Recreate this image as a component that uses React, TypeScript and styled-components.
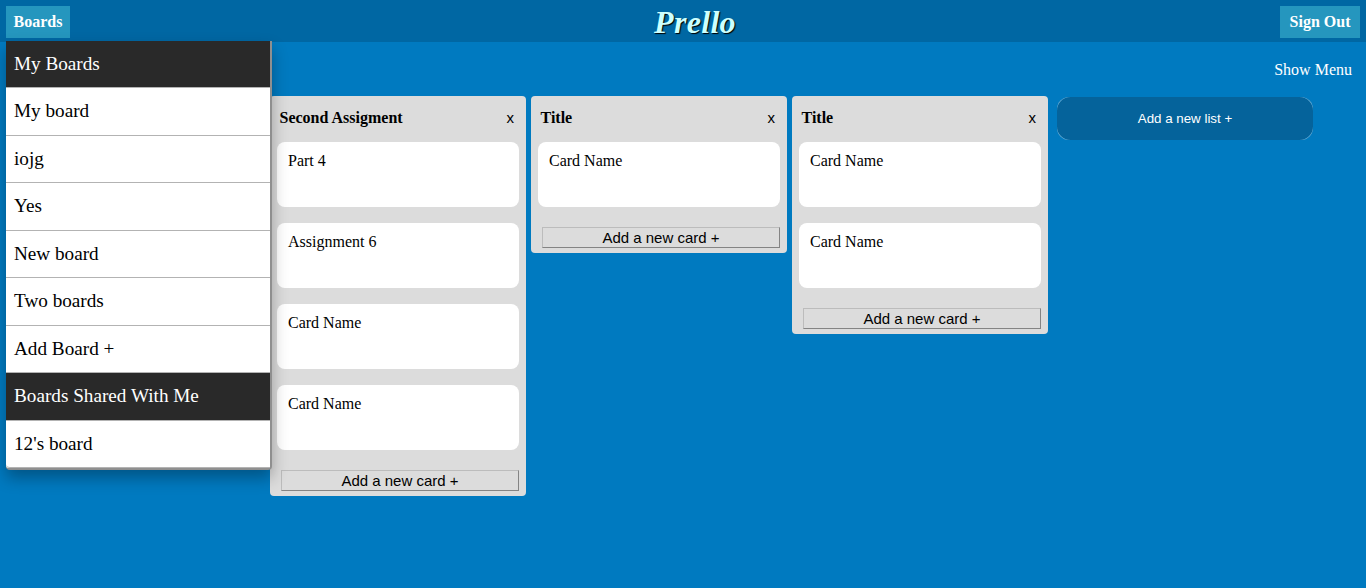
import React from 'react';
import styled, { createGlobalStyle } from 'styled-components';

const GlobalStyle = createGlobalStyle`
  * { box-sizing: border-box; }
  body {
    margin: 0;
    min-height: 100vh;
    background: #007ac0;
    font-family: "Liberation Serif", "Times New Roman", serif;
    font-size: 16px;
    overflow: hidden;
  }
`;

const Header = styled.header`
  display: flex;
  align-items: flex-start;
  justify-content: space-between;
  height: 42px;
  padding: 6px;
  background: #0067a3;
`;

const Side = styled.div<{ $end?: boolean }>`
  flex: 1;
  display: flex;
  position: relative;
  justify-content: ${(p) => (p.$end ? 'flex-end' : 'flex-start')};
`;

const HeaderButton = styled.button<{ $width: number }>`
  width: ${(p) => p.$width}px;
  height: 32px;
  padding: 0;
  border: none;
  background: #2596be;
  color: #fff;
  font: bold 16px "Liberation Serif", serif;
`;

const Logo = styled.h1`
  margin: 2px 0 0 24px;
  color: #ccffff;
  font-size: 32px;
  line-height: 28px;
  font-style: italic;
  letter-spacing: 0.3px;
  text-shadow: 1px 1px 1px #000;
`;

const BoardMenu = styled.nav`
  position: absolute;
  top: 35px;
  left: 0;
  z-index: 2;
  width: 266px;
  border-right: 2px solid #8f8f8f;
  border-bottom: 2px solid #8f8f8f;
  border-radius: 0 0 4px 4px;
  background: #fff;
  box-shadow: 0 8px 16px rgba(0, 0, 0, 0.3);
`;

const MenuRow = styled.div<{ $heading?: boolean }>`
  height: 47.5px;
  padding-left: 8px;
  border-bottom: 1px solid #b3b3b3;
  background: ${(p) => (p.$heading ? '#292929' : '#fff')};
  color: ${(p) => (p.$heading ? '#fff' : '#000')};
  font-size: 19.2px;
  line-height: 46px;

  &:first-child { height: 47px; }
  &:last-child { border-bottom-left-radius: 4px; }
`;

const Toolbar = styled.div`
  display: flex;
  justify-content: flex-end;
  height: 54px;
  padding: 19px 14px 0 0;
  color: #fff;
  line-height: 18px;
`;

const Board = styled.main`
  display: flex;
  align-items: flex-start;
  gap: 5px;
  padding-left: 270px;
`;

const List = styled.section`
  width: 256px;
  padding: 0 7px 5px;
  border-radius: 4px;
  background: #dcdcdc;
`;

const ListHeader = styled.div`
  display: flex;
  justify-content: space-between;
  height: 46px;
  padding: 0 5px 0 2.5px;
  line-height: 44px;
`;

const ListTitle = styled.span`
  font-weight: bold;
`;

const Close = styled.span`
  font: 15px/44px "Liberation Sans", sans-serif;
`;

const Card = styled.article`
  height: 65px;
  margin-bottom: 16px;
  padding: 10px 11px;
  border-radius: 8px;
  background: #fff;
  line-height: 18px;
`;

const AddCard = styled.button`
  display: block;
  width: 238px;
  height: 21px;
  margin: 20px 0 0 4px;
  padding: 0;
  border: 1px solid;
  border-color: #bcbcbc #848484 #848484 #bcbcbc;
  background: transparent;
  color: #000;
  font: 15px/19px "Liberation Sans", Arial, sans-serif;
`;

const AddList = styled.button`
  width: 256px;
  height: 43px;
  margin: 1px 0 0 4px;
  padding: 0;
  border: none;
  border-radius: 12px;
  background: #6fb0d6;
  color: #fff;
  font: 13.333px "Liberation Sans", Arial, sans-serif;
`;

const AddListFace = styled.span`
  display: flex;
  align-items: center;
  justify-content: center;
  height: 100%;
  border-radius: 13.5px;
  background: #05639b;
`;

const Cards = styled.div`
  ${Card}:last-child { margin-bottom: 0; }
`;

const menu = [
  { label: 'My Boards', heading: true },
  { label: 'My board' },
  { label: 'iojg' },
  { label: 'Yes' },
  { label: 'New board' },
  { label: 'Two boards' },
  { label: 'Add Board +' },
  { label: 'Boards Shared With Me', heading: true },
  { label: "12's board" },
];

const lists = [
  { title: 'Second Assigment', cards: ['Part 4', 'Assignment 6', 'Card Name', 'Card Name'] },
  { title: 'Title', cards: ['Card Name'] },
  { title: 'Title', cards: ['Card Name', 'Card Name'] },
];

export default function App() {
  return (
    <>
      <GlobalStyle />
      <Header>
        <Side>
          <HeaderButton $width={64}>Boards</HeaderButton>
          <BoardMenu>
            {menu.map((item) => (
              <MenuRow key={item.label} $heading={item.heading}>{item.label}</MenuRow>
            ))}
          </BoardMenu>
        </Side>
        <Logo>Prello</Logo>
        <Side $end>
          <HeaderButton $width={80}>Sign Out</HeaderButton>
        </Side>
      </Header>
      <Toolbar>Show Menu</Toolbar>
      <Board>
        {lists.map((list, i) => (
          <List key={i}>
            <ListHeader>
              <ListTitle>{list.title}</ListTitle>
              <Close>x</Close>
            </ListHeader>
            <Cards>
              {list.cards.map((card, j) => (
                <Card key={j}>{card}</Card>
              ))}
            </Cards>
            <AddCard>Add a new card +</AddCard>
          </List>
        ))}
        <AddList><AddListFace>Add a new list +</AddListFace></AddList>
      </Board>
    </>
  );
}
